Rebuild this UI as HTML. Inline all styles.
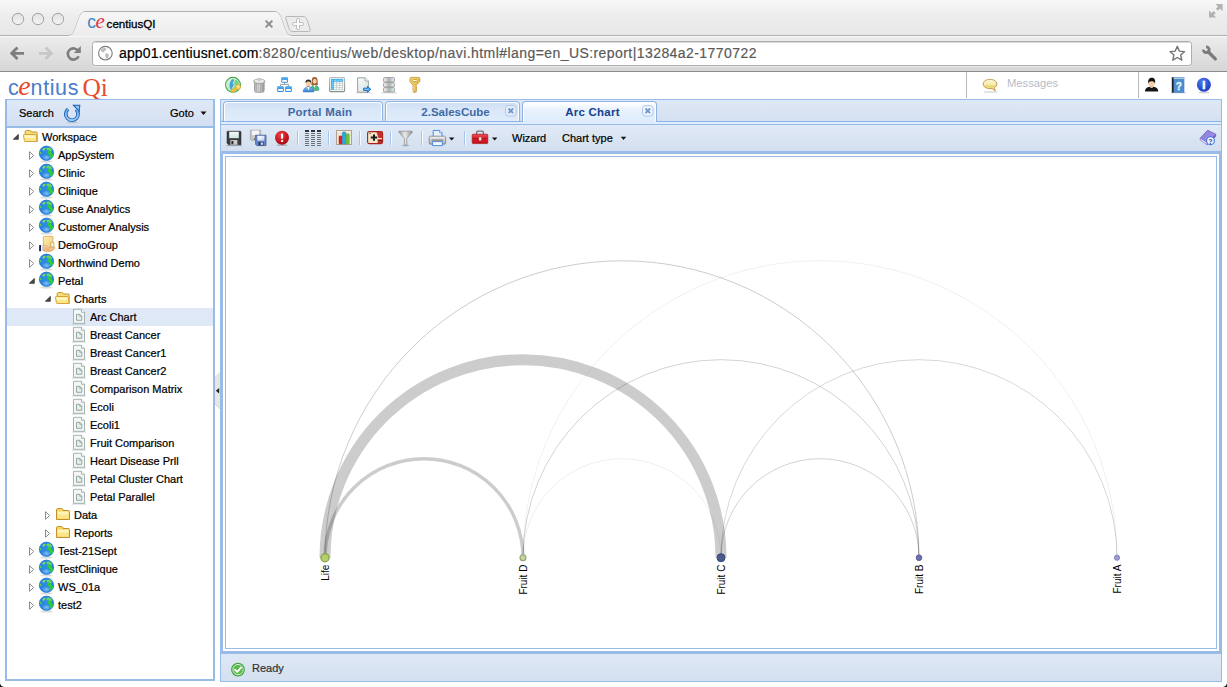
<!DOCTYPE html>
<html>
<head>
<meta charset="utf-8">
<title>centiusQI</title>
<style>
html,body{margin:0;padding:0;}
body{width:1227px;height:687px;overflow:hidden;background:#fff;position:relative;font-family:"Liberation Sans",sans-serif;font-size:11px;color:#000;}
.abs{position:absolute;}
/* browser chrome */
#chrome{left:0;top:0;width:1227px;height:72px;background:linear-gradient(#f8f8f8 0,#eeeeee 14px,#e7e7e7 35px,#ececec 37px,#d7d7d7 70px);border-bottom:1px solid #8c8c8c;box-sizing:border-box;}
#url{-webkit-text-stroke:.2px currentColor;left:119px;top:45px;font-size:14px;color:#000;white-space:nowrap;letter-spacing:0.125px;}
#url span{color:#5a5a5a;letter-spacing:.43px;}
#tabtitle{left:106.6px;top:17.4px;font-size:11.6px;line-height:14px;color:#000;-webkit-text-stroke:.3px #000;white-space:nowrap;}
#fav span{position:absolute;line-height:20px;}
/* app */
#left{left:5px;top:99px;width:210px;height:582px;border:2px solid #99bbe8;border-top-width:1px;box-sizing:border-box;background:#fff;}
#lefthd{left:0;top:0;width:206px;height:26px;background:linear-gradient(#dfe8f6,#d3e0f2);border-bottom:2px solid #99bbe8;}
.row{position:absolute;left:0;width:206px;height:18px;line-height:18px;white-space:nowrap;}
.row span{position:absolute;top:0;-webkit-text-stroke:.22px #000;}
.sel{background:#dfe8f6;}
#right{left:220px;top:99px;width:1002px;height:582px;}
#tabstrip{left:0;top:0;width:1002px;height:25px;background:#dce7f6;border:1px solid #99bbe8;box-sizing:border-box;}
.tab{position:absolute;height:20px;border:1px solid #8db2e3;border-bottom:none;border-radius:4px 4px 0 0;background:#fbfdff;box-sizing:border-box;color:#416aa3;font-weight:bold;font-size:11.5px;letter-spacing:.25px;text-align:center;}
.tab .ti{position:absolute;left:1px;top:1px;right:1px;bottom:0;border-radius:3px 3px 0 0;background:linear-gradient(#cfdff5,#dbe8f9 45%,#e0ecfc);line-height:18px;white-space:nowrap;}
.tab.act{height:20px;color:#15428b;background:#fff;}
.tab.act .ti{background:linear-gradient(#ffffff,#eaf2fd 35%,#deecfd);}
#tb{left:0;top:25px;width:1002px;height:27px;background:linear-gradient(#dfe9f6,#d0def0);border-left:1px solid #99bbe8;border-right:1px solid #99bbe8;box-sizing:border-box;}
#frame{left:0;top:52px;width:1002px;height:503px;border:3px solid #99bbe8;box-sizing:border-box;background:#fff;}
#inner{left:2px;top:2px;width:992px;height:493px;border:1px solid #99bbe8;box-sizing:border-box;background:#fff;}
#status{left:0;top:555px;width:1002px;height:27px;background:linear-gradient(#dfe9f6,#d0def0);border:1px solid #99bbe8;border-top:none;box-sizing:border-box;}
#logo{left:0;top:0;white-space:nowrap;}
#logo span{position:absolute;line-height:30px;top:73px;transform-origin:0 50%;}
#logo .lb{color:#4a7cc9;font-size:21.5px;}
#logo .le{color:#ea4a2c;font-family:"Liberation Serif",serif;font-style:italic;font-size:28px;}
#logo .lq{color:#ea4a2c;font-family:"Liberation Serif",serif;font-size:25.4px;}
.lbl{-webkit-text-stroke:.22px currentColor;}
</style>
</head>
<body>
<svg class="abs" width="0" height="0" style="left:0;top:0"><defs>
<radialGradient id="gGlobe" cx="0.5" cy="0.42" r="0.58"><stop offset="0" stop-color="#2f8fe4"/><stop offset=".7" stop-color="#2a84da"/><stop offset=".92" stop-color="#2678cf"/><stop offset="1" stop-color="#3c96e6"/></radialGradient>
<linearGradient id="gTrash" x1="0" y1="0" x2="1" y2="0"><stop offset="0" stop-color="#b0b0b0"/><stop offset=".4" stop-color="#e6e6e6"/><stop offset="1" stop-color="#9c9d9a"/></linearGradient>
<linearGradient id="gDoc" x1="0" y1="0" x2="1" y2="1"><stop offset="0" stop-color="#f8fbfa"/><stop offset="1" stop-color="#d5e0de"/></linearGradient>
<linearGradient id="gSrv" x1="0" y1="0" x2="1" y2="0"><stop offset="0" stop-color="#8e8e8e"/><stop offset=".3" stop-color="#dcdcdc"/><stop offset=".6" stop-color="#c4c8c4"/><stop offset="1" stop-color="#9a9a9a"/></linearGradient>
<linearGradient id="gBub" x1="0" y1="0" x2="0" y2="1"><stop offset="0" stop-color="#fbf6d6"/><stop offset=".45" stop-color="#f3ecb0"/><stop offset=".55" stop-color="#e6d96a"/><stop offset="1" stop-color="#efe7a0"/></linearGradient>
<radialGradient id="gInfo" cx=".4" cy=".3" r=".8"><stop offset="0" stop-color="#5679ea"/><stop offset=".6" stop-color="#2a4fd0"/><stop offset="1" stop-color="#1b38ac"/></radialGradient>
<linearGradient id="gLabel" x1="0" y1="0" x2="0" y2="1"><stop offset="0" stop-color="#f4fbfa"/><stop offset="1" stop-color="#cfe6e2"/></linearGradient>
<linearGradient id="gLabel2" x1="0" y1="0" x2="1" y2="1"><stop offset="0" stop-color="#ffffff"/><stop offset="1" stop-color="#c8d4f2"/></linearGradient>
<radialGradient id="gRed" cx=".4" cy=".3" r=".8"><stop offset="0" stop-color="#e8444a"/><stop offset=".55" stop-color="#c81820"/><stop offset="1" stop-color="#9c0c12"/></radialGradient>
<linearGradient id="gFun" x1="0" y1="0" x2="1" y2="0"><stop offset="0" stop-color="#9c9c9c"/><stop offset=".45" stop-color="#ececec"/><stop offset="1" stop-color="#8e8e8e"/></linearGradient>
<linearGradient id="gPrn" x1="0" y1="0" x2="0" y2="1"><stop offset="0" stop-color="#f2f2f2"/><stop offset=".5" stop-color="#cfcfcf"/><stop offset="1" stop-color="#a8a8a8"/></linearGradient>
<linearGradient id="gRedBox" x1="0" y1="0" x2="0" y2="1"><stop offset="0" stop-color="#ee4a50"/><stop offset=".5" stop-color="#d41c24"/><stop offset="1" stop-color="#c0141c"/></linearGradient>
<linearGradient id="gRef" x1="0" y1="0" x2="0" y2="1"><stop offset="0" stop-color="#5ea6ea"/><stop offset="1" stop-color="#9fd0f8"/></linearGradient>
<linearGradient id="gGk" x1="0" y1="0" x2="1" y2="1"><stop offset="0" stop-color="#eaf7e0"/><stop offset=".45" stop-color="#bfe6c8"/><stop offset="1" stop-color="#58c86a"/></linearGradient>
<linearGradient id="gOrg" x1="0" y1="0" x2="0" y2="1"><stop offset="0" stop-color="#6cc2f6"/><stop offset=".35" stop-color="#3a9eee"/><stop offset="1" stop-color="#2f8de4"/></linearGradient>
<linearGradient id="gTblB" x1="0" y1="0" x2="0" y2="1"><stop offset="0" stop-color="#b9bfbe"/><stop offset="1" stop-color="#858d8b"/></linearGradient>
<linearGradient id="gMan" x1="0" y1="0" x2="0" y2="1"><stop offset="0" stop-color="#86bdf0"/><stop offset="1" stop-color="#3b80d2"/></linearGradient>
<linearGradient id="gSrv1" x1="0" y1="0" x2="1" y2="0"><stop offset="0" stop-color="#f6f6f6"/><stop offset=".25" stop-color="#d6d6d6"/><stop offset=".5" stop-color="#aeb0b0"/><stop offset=".8" stop-color="#d4d4f0"/><stop offset="1" stop-color="#f0f2f4"/></linearGradient>
<linearGradient id="gSrv2" x1="0" y1="0" x2="1" y2="0"><stop offset="0" stop-color="#f6f6f6"/><stop offset=".25" stop-color="#d6d6d6"/><stop offset=".5" stop-color="#aeb0b0"/><stop offset=".8" stop-color="#cadcd8"/><stop offset="1" stop-color="#f0f2f4"/></linearGradient>
<linearGradient id="gSrv3" x1="0" y1="0" x2="1" y2="0"><stop offset="0" stop-color="#f6f6f6"/><stop offset=".25" stop-color="#d6d6d6"/><stop offset=".5" stop-color="#aeb0b0"/><stop offset=".8" stop-color="#c2e0cc"/><stop offset="1" stop-color="#f0f2f4"/></linearGradient>
<linearGradient id="gKey" x1="0" y1="0" x2="1" y2="1"><stop offset="0" stop-color="#f6d87a"/><stop offset=".5" stop-color="#e9bf55"/><stop offset="1" stop-color="#d9a93c"/></linearGradient>
<radialGradient id="gGlow" cx=".5" cy=".5" r=".5"><stop offset="0" stop-color="#8ccaff" stop-opacity=".85"/><stop offset="1" stop-color="#8ccaff" stop-opacity="0"/></radialGradient>
<linearGradient id="gBook" x1="0" y1="0" x2="1" y2="1"><stop offset="0" stop-color="#8676d4"/><stop offset="1" stop-color="#a99cea"/></linearGradient>
<linearGradient id="gGrpF" x1="0" y1="0" x2="1" y2="1"><stop offset="0" stop-color="#faeaa8"/><stop offset="1" stop-color="#ecd288"/></linearGradient>
<linearGradient id="gGrpS" x1="0" y1="0" x2="0" y2="1"><stop offset="0" stop-color="#ffffff"/><stop offset=".55" stop-color="#e8f6fd"/><stop offset="1" stop-color="#2fa8ec"/></linearGradient>
<linearGradient id="gGrpH" x1="0" y1="0" x2="0" y2="1"><stop offset="0" stop-color="#f8d2a0"/><stop offset="1" stop-color="#eeb478"/></linearGradient>
<linearGradient id="gGrpC" x1="0" y1="0" x2="1" y2="0"><stop offset="0" stop-color="#ffffff"/><stop offset="1" stop-color="#c4c8d0"/></linearGradient>
</defs></svg>
<div id="chrome" class="abs"></div>
<svg class="abs" style="left:0;top:0" width="1227" height="72" viewBox="0 0 1227 72">
<defs>
<linearGradient id="gtab" x1="0" y1="0" x2="0" y2="1"><stop offset="0" stop-color="#f6f6f6"/><stop offset="1" stop-color="#ececec"/></linearGradient>
<linearGradient id="gcir" x1="0" y1="0" x2="0" y2="1"><stop offset="0" stop-color="#e2e2e2"/><stop offset="1" stop-color="#f4f4f4"/></linearGradient>
</defs>
<!-- tab strip bottom line -->
<path d="M0 35.5 H68 C72 35.5 73.5 33 74.8 29.5 L79.2 17.5 C80.5 14 82 11.5 86 11.5 H274 C278 11.5 279.5 14 280.8 17.5 L285.2 29.5 C286.5 33 288 35.5 292 35.5 H1227" fill="none" stroke="#b0b0b0" stroke-width="1"/>
<path d="M68 36 C72 35.5 73.5 33 74.8 29.5 L79.2 17.5 C80.5 14 82 12 86 12 H274 C278 12 279.5 14 280.8 17.5 L285.2 29.5 C286.5 33 288 35.5 292 36 Z" fill="url(#gtab)"/>
<path d="M0 36.5 H1227" stroke="#f8f8f8" stroke-width="1" fill="none"/>
<!-- traffic lights -->
<g fill="url(#gcir)" stroke="#a3a3a3" stroke-width="1">
<circle cx="18" cy="19" r="5.7"/><circle cx="38" cy="19" r="5.7"/><circle cx="58" cy="19" r="5.7"/>
</g>
<!-- close x -->
<path d="M265.6 20.6 L272.4 27.4 M272.4 20.6 L265.6 27.4" stroke="#8c8c8c" stroke-width="2" fill="none"/>
<!-- new tab button -->
<path d="M286.5 16.5 H303 C305.5 16.5 306.5 18 307.3 20.5 L310 29 C310.5 30.5 310 31.5 308.5 31.5 H293 C290.5 31.5 289.5 30 288.7 27.5 L286 19 C285.5 17.5 285.5 16.5 286.5 16.5 Z" fill="#ececec" stroke="#b8b8b8" stroke-width="1"/>
<path d="M298 19.8 V28.2 M293.8 24 H302.2" stroke="#b5b5b5" stroke-width="3.6" stroke-linecap="round" fill="none"/>
<path d="M298 19.8 V28.2 M293.8 24 H302.2" stroke="#fbfbfb" stroke-width="2" stroke-linecap="round" fill="none"/>
<!-- fullscreen -->
<g fill="#b2b2b2" stroke="none">
<path d="M1222.6 4 V11.2 L1220 8.6 L1217.9 10.7 L1215.9 8.7 L1218 6.6 L1215.4 4 Z"/>
<path d="M1209 17.6 V10.4 L1211.6 13 L1213.7 10.9 L1215.7 12.9 L1213.6 15 L1216.2 17.6 Z"/>
</g>
<!-- back -->
<path d="M24 53.3 H12.5 M17.5 47.5 L11.7 53.3 L17.5 59.1" fill="none" stroke="#7d7d7d" stroke-width="2.8" stroke-linejoin="miter"/>
<!-- forward -->
<path d="M39 53.3 H50.5 M45.5 47.5 L51.3 53.3 L45.5 59.1" fill="none" stroke="#c6c6c6" stroke-width="2.8" stroke-linejoin="miter"/>
<!-- reload -->
<path d="M78.2 51 A5.6 5.6 0 1 0 78.6 56.2" fill="none" stroke="#7d7d7d" stroke-width="2.6"/>
<path d="M80.8 46 V53 H73.8 Z" fill="#7d7d7d"/>
<!-- url box -->
<path d="M94 66.5 H1190" stroke="#e9e9e9" fill="none"/>
<rect x="92.5" y="41.5" width="1099" height="24" rx="3" ry="3" fill="#fff" stroke="#adadad"/>
<path d="M95 42.5 H1189" stroke="#d9d9d9" fill="none"/>
<!-- globe -->
<circle cx="105.4" cy="53.2" r="6.8" fill="#fdfdfd" stroke="#7a7a7a" stroke-width="1.1"/>
<path d="M102 48.5 C104 47.5 106 48 106.5 49 C106 50.5 104.5 50.5 104 52 C103 53 102 52 101 51 C100.8 50 101.2 49.2 102 48.5 Z M105.5 53.5 C107 53 108.5 54 109 55.5 C108.5 57.5 107.5 58.5 106.5 59 C105.5 57.5 105 56 105.5 53.5 Z" fill="#bcbcbc"/>
<!-- star -->
<path d="M1177.3 46.3 L1179.4 51.1 L1184.6 51.6 L1180.7 55.1 L1181.8 60.2 L1177.3 57.5 L1172.8 60.2 L1173.9 55.1 L1170 51.6 L1175.2 51.1 Z" fill="#fff" stroke="#757575" stroke-width="1.4" stroke-linejoin="round"/>
<!-- wrench -->
<path d="M1206.1 46.9 A2.9 2.9 0 1 1 1203.4 49.6" fill="none" stroke="#7b7b7b" stroke-width="2.7"/>
<path d="M1208.2 51.8 L1215.3 58.9" fill="none" stroke="#7b7b7b" stroke-width="3.4" stroke-linecap="round"/>
</svg>
<div id="fav" class="abs" style="left:0;top:0"><span style="left:87.2px;top:12.2px;font-size:17.5px;color:#3b86c8">c</span><span style="left:95.6px;top:11.4px;font-family:'Liberation Serif',serif;font-style:italic;font-size:21px;color:#e0364a">e</span></div>
<div id="tabtitle" class="abs">centiusQI</div>
<div id="url" class="abs">app01.centiusnet.com<span>:8280/centius/web/desktop/navi.html#lang=en_US:report|13284a2-1770722</span></div>

<div id="logo" class="abs"><span class="lb" style="left:8px">c</span><span class="le" style="left:18.3px;top:71px">e</span><span class="lb" style="left:30.6px;letter-spacing:.6px">ntius</span><span class="lq" style="left:82.5px;top:71.6px">Qi</span></div>
<div id="left" class="abs">
<div id="lefthd" class="abs">
<span class="abs lbl" style="left:12px;top:7px">Search</span>
<svg class="abs" style="left:55px;top:3px" width="20" height="21" viewBox="62 103 20 21">
<ellipse cx="72" cy="122.4" rx="6" ry=".8" fill="#000" opacity=".12"/>
<path d="M76.05 109.39 A6.2 6.2 0 1 1 68.08 109.11" fill="none" stroke="#1b5fb4" stroke-width="3.6"/>
<path d="M72.2 104.8 H80.4 L79.6 112.4 Z" fill="#1b5fb4"/>
<path d="M76.05 109.39 A6.2 6.2 0 1 1 68.08 109.11" fill="none" stroke="url(#gRef)" stroke-width="1.9"/>
<path d="M74.6 105.8 H79.3 L78.8 110 Z" fill="#8cc6f4"/>
</svg>
<span class="abs lbl" style="left:163px;top:7px">Goto</span>
<svg class="abs" style="left:193px;top:11px" width="7" height="5" viewBox="0 0 7 5"><path d="M0.5 0.5 H6.5 L3.5 4 Z" fill="#111"/></svg>
</div>
<div class="row" style="top:28px"><svg class="abs" style="left:5px;top:5px" width="9" height="9" viewBox="0 0 9 9"><g transform="translate(0 0)"><path d="M6.3 1.4 V6.3 H1.4 Z" fill="#4a4a4a" stroke="#1e1e1e" stroke-width=".7"/></g></svg><svg class="abs" style="left:15px;top:0px" width="18" height="17" viewBox="0 0 18 17"><g transform="translate(0.7 0)"><path d="M2.5 13.5 V4 C2.5 3 3 2.5 4 2.5 H7 C8 2.5 8.4 3 8.6 4 H13.5 C14.3 4 14.5 4.4 14.5 5.2 V13.5 Z" fill="#f7dc7a" stroke="#c9932c" stroke-width="1"/>
<path d="M0.8 7.5 C0.6 6.8 1 6.5 1.6 6.5 H12.4 C13 6.5 13.3 6.8 13.4 7.4 L14.4 13.5 H2.6 C2 13.5 1.8 13.2 1.7 12.6 Z" fill="#fdeea0" stroke="#d6a33a" stroke-width="1"/>
<path d="M1.8 7.5 H12.4 L13.2 12.6 H2.8 Z" fill="#fbe27e" opacity=".8"/>
<path d="M1.8 7.5 H12.4 L12.8 10 H2.2 Z" fill="#fff6c4" opacity=".9"/>
</g></svg><span style="left:35px">Workspace</span></div>
<div class="row" style="top:46px"><svg class="abs" style="left:21px;top:4px" width="8" height="11" viewBox="0 0 8 11"><g transform="translate(0.5 0.7)"><path d="M1 1 L5.2 4.8 L1 8.6 Z" fill="#fff" stroke="#8c8c8c" stroke-width="1"/></g></svg><svg class="abs" style="left:31px;top:-1px" width="17" height="19" viewBox="0 0 17 19"><g transform="translate(0.5 0.5)"><ellipse cx="8" cy="16" rx="6" ry="1.1" fill="#8a7a6a" opacity=".28"/>
<circle cx="8" cy="7.8" r="7.5" fill="url(#gGlobe)"/>
<ellipse cx="8" cy="12" rx="5" ry="3.2" fill="url(#gGlow)"/>
<path d="M4.2 3.2 C5 2.4 6.2 2.2 7 2.6 C7.2 3.4 6.6 3.8 6.2 4.4 C5.8 5 5 5.4 4.4 5.2 C4 4.6 3.8 3.8 4.2 3.2 Z" fill="#7ddb74"/>
<path d="M7.8 2.6 C9 1.8 10.6 1.8 11.8 2.4 C12.8 3 13.4 4 13.6 5 C13 5.8 12 5.6 11.2 5.2 C10.4 4.8 9.8 5.2 9 4.8 C8.2 4.2 7.6 3.4 7.8 2.6 Z" fill="#63d560"/>
<path d="M8.8 6 C10 5.4 11.4 5.6 12.6 6 C13.4 6.8 13 7.6 13.6 8.2 C14.4 8.6 14.8 9.6 14.6 10.6 C14.2 11.8 13.4 12.8 12.4 13.2 C11.6 12.6 11.8 11.4 11.6 10.4 C11.4 9.4 10.6 9 10 8.4 C9.2 7.8 8.6 7 8.8 6 Z" fill="#2bd033"/>
<path d="M1.3 6.2 C2 6 2.6 6.6 3 7.4 C3.4 8 3.2 8.6 2.6 8.8 C1.8 8.6 1.2 7.6 1.3 6.2 Z" fill="#4fd44e"/>
<circle cx="8" cy="7.8" r="7.2" fill="none" stroke="#2f86dc" stroke-width=".6" opacity=".8"/>
</g></svg><span style="left:51px">AppSystem</span></div>
<div class="row" style="top:64px"><svg class="abs" style="left:21px;top:4px" width="8" height="11" viewBox="0 0 8 11"><g transform="translate(0.5 0.7)"><path d="M1 1 L5.2 4.8 L1 8.6 Z" fill="#fff" stroke="#8c8c8c" stroke-width="1"/></g></svg><svg class="abs" style="left:31px;top:-1px" width="17" height="19" viewBox="0 0 17 19"><g transform="translate(0.5 0.5)"><ellipse cx="8" cy="16" rx="6" ry="1.1" fill="#8a7a6a" opacity=".28"/>
<circle cx="8" cy="7.8" r="7.5" fill="url(#gGlobe)"/>
<ellipse cx="8" cy="12" rx="5" ry="3.2" fill="url(#gGlow)"/>
<path d="M4.2 3.2 C5 2.4 6.2 2.2 7 2.6 C7.2 3.4 6.6 3.8 6.2 4.4 C5.8 5 5 5.4 4.4 5.2 C4 4.6 3.8 3.8 4.2 3.2 Z" fill="#7ddb74"/>
<path d="M7.8 2.6 C9 1.8 10.6 1.8 11.8 2.4 C12.8 3 13.4 4 13.6 5 C13 5.8 12 5.6 11.2 5.2 C10.4 4.8 9.8 5.2 9 4.8 C8.2 4.2 7.6 3.4 7.8 2.6 Z" fill="#63d560"/>
<path d="M8.8 6 C10 5.4 11.4 5.6 12.6 6 C13.4 6.8 13 7.6 13.6 8.2 C14.4 8.6 14.8 9.6 14.6 10.6 C14.2 11.8 13.4 12.8 12.4 13.2 C11.6 12.6 11.8 11.4 11.6 10.4 C11.4 9.4 10.6 9 10 8.4 C9.2 7.8 8.6 7 8.8 6 Z" fill="#2bd033"/>
<path d="M1.3 6.2 C2 6 2.6 6.6 3 7.4 C3.4 8 3.2 8.6 2.6 8.8 C1.8 8.6 1.2 7.6 1.3 6.2 Z" fill="#4fd44e"/>
<circle cx="8" cy="7.8" r="7.2" fill="none" stroke="#2f86dc" stroke-width=".6" opacity=".8"/>
</g></svg><span style="left:51px">Clinic</span></div>
<div class="row" style="top:82px"><svg class="abs" style="left:21px;top:4px" width="8" height="11" viewBox="0 0 8 11"><g transform="translate(0.5 0.7)"><path d="M1 1 L5.2 4.8 L1 8.6 Z" fill="#fff" stroke="#8c8c8c" stroke-width="1"/></g></svg><svg class="abs" style="left:31px;top:-1px" width="17" height="19" viewBox="0 0 17 19"><g transform="translate(0.5 0.5)"><ellipse cx="8" cy="16" rx="6" ry="1.1" fill="#8a7a6a" opacity=".28"/>
<circle cx="8" cy="7.8" r="7.5" fill="url(#gGlobe)"/>
<ellipse cx="8" cy="12" rx="5" ry="3.2" fill="url(#gGlow)"/>
<path d="M4.2 3.2 C5 2.4 6.2 2.2 7 2.6 C7.2 3.4 6.6 3.8 6.2 4.4 C5.8 5 5 5.4 4.4 5.2 C4 4.6 3.8 3.8 4.2 3.2 Z" fill="#7ddb74"/>
<path d="M7.8 2.6 C9 1.8 10.6 1.8 11.8 2.4 C12.8 3 13.4 4 13.6 5 C13 5.8 12 5.6 11.2 5.2 C10.4 4.8 9.8 5.2 9 4.8 C8.2 4.2 7.6 3.4 7.8 2.6 Z" fill="#63d560"/>
<path d="M8.8 6 C10 5.4 11.4 5.6 12.6 6 C13.4 6.8 13 7.6 13.6 8.2 C14.4 8.6 14.8 9.6 14.6 10.6 C14.2 11.8 13.4 12.8 12.4 13.2 C11.6 12.6 11.8 11.4 11.6 10.4 C11.4 9.4 10.6 9 10 8.4 C9.2 7.8 8.6 7 8.8 6 Z" fill="#2bd033"/>
<path d="M1.3 6.2 C2 6 2.6 6.6 3 7.4 C3.4 8 3.2 8.6 2.6 8.8 C1.8 8.6 1.2 7.6 1.3 6.2 Z" fill="#4fd44e"/>
<circle cx="8" cy="7.8" r="7.2" fill="none" stroke="#2f86dc" stroke-width=".6" opacity=".8"/>
</g></svg><span style="left:51px">Clinique</span></div>
<div class="row" style="top:100px"><svg class="abs" style="left:21px;top:4px" width="8" height="11" viewBox="0 0 8 11"><g transform="translate(0.5 0.7)"><path d="M1 1 L5.2 4.8 L1 8.6 Z" fill="#fff" stroke="#8c8c8c" stroke-width="1"/></g></svg><svg class="abs" style="left:31px;top:-1px" width="17" height="19" viewBox="0 0 17 19"><g transform="translate(0.5 0.5)"><ellipse cx="8" cy="16" rx="6" ry="1.1" fill="#8a7a6a" opacity=".28"/>
<circle cx="8" cy="7.8" r="7.5" fill="url(#gGlobe)"/>
<ellipse cx="8" cy="12" rx="5" ry="3.2" fill="url(#gGlow)"/>
<path d="M4.2 3.2 C5 2.4 6.2 2.2 7 2.6 C7.2 3.4 6.6 3.8 6.2 4.4 C5.8 5 5 5.4 4.4 5.2 C4 4.6 3.8 3.8 4.2 3.2 Z" fill="#7ddb74"/>
<path d="M7.8 2.6 C9 1.8 10.6 1.8 11.8 2.4 C12.8 3 13.4 4 13.6 5 C13 5.8 12 5.6 11.2 5.2 C10.4 4.8 9.8 5.2 9 4.8 C8.2 4.2 7.6 3.4 7.8 2.6 Z" fill="#63d560"/>
<path d="M8.8 6 C10 5.4 11.4 5.6 12.6 6 C13.4 6.8 13 7.6 13.6 8.2 C14.4 8.6 14.8 9.6 14.6 10.6 C14.2 11.8 13.4 12.8 12.4 13.2 C11.6 12.6 11.8 11.4 11.6 10.4 C11.4 9.4 10.6 9 10 8.4 C9.2 7.8 8.6 7 8.8 6 Z" fill="#2bd033"/>
<path d="M1.3 6.2 C2 6 2.6 6.6 3 7.4 C3.4 8 3.2 8.6 2.6 8.8 C1.8 8.6 1.2 7.6 1.3 6.2 Z" fill="#4fd44e"/>
<circle cx="8" cy="7.8" r="7.2" fill="none" stroke="#2f86dc" stroke-width=".6" opacity=".8"/>
</g></svg><span style="left:51px">Cuse Analytics</span></div>
<div class="row" style="top:118px"><svg class="abs" style="left:21px;top:4px" width="8" height="11" viewBox="0 0 8 11"><g transform="translate(0.5 0.7)"><path d="M1 1 L5.2 4.8 L1 8.6 Z" fill="#fff" stroke="#8c8c8c" stroke-width="1"/></g></svg><svg class="abs" style="left:31px;top:-1px" width="17" height="19" viewBox="0 0 17 19"><g transform="translate(0.5 0.5)"><ellipse cx="8" cy="16" rx="6" ry="1.1" fill="#8a7a6a" opacity=".28"/>
<circle cx="8" cy="7.8" r="7.5" fill="url(#gGlobe)"/>
<ellipse cx="8" cy="12" rx="5" ry="3.2" fill="url(#gGlow)"/>
<path d="M4.2 3.2 C5 2.4 6.2 2.2 7 2.6 C7.2 3.4 6.6 3.8 6.2 4.4 C5.8 5 5 5.4 4.4 5.2 C4 4.6 3.8 3.8 4.2 3.2 Z" fill="#7ddb74"/>
<path d="M7.8 2.6 C9 1.8 10.6 1.8 11.8 2.4 C12.8 3 13.4 4 13.6 5 C13 5.8 12 5.6 11.2 5.2 C10.4 4.8 9.8 5.2 9 4.8 C8.2 4.2 7.6 3.4 7.8 2.6 Z" fill="#63d560"/>
<path d="M8.8 6 C10 5.4 11.4 5.6 12.6 6 C13.4 6.8 13 7.6 13.6 8.2 C14.4 8.6 14.8 9.6 14.6 10.6 C14.2 11.8 13.4 12.8 12.4 13.2 C11.6 12.6 11.8 11.4 11.6 10.4 C11.4 9.4 10.6 9 10 8.4 C9.2 7.8 8.6 7 8.8 6 Z" fill="#2bd033"/>
<path d="M1.3 6.2 C2 6 2.6 6.6 3 7.4 C3.4 8 3.2 8.6 2.6 8.8 C1.8 8.6 1.2 7.6 1.3 6.2 Z" fill="#4fd44e"/>
<circle cx="8" cy="7.8" r="7.2" fill="none" stroke="#2f86dc" stroke-width=".6" opacity=".8"/>
</g></svg><span style="left:51px">Customer Analysis</span></div>
<div class="row" style="top:136px"><svg class="abs" style="left:21px;top:4px" width="8" height="11" viewBox="0 0 8 11"><g transform="translate(0.5 0.7)"><path d="M1 1 L5.2 4.8 L1 8.6 Z" fill="#fff" stroke="#8c8c8c" stroke-width="1"/></g></svg><svg class="abs" style="left:31px;top:-1px" width="18" height="18" viewBox="0 0 18 18"><g transform="translate(0.4 0)"><rect x="4.9" y="1.4" width="9.6" height="11.4" rx=".9" fill="url(#gGrpF)" stroke="#dcb25c" stroke-width=".9"/>
<rect x="11.9" y="7.2" width="3.7" height="6" rx=".8" fill="#f3dc96" stroke="#d4a850" stroke-width=".8"/>
<rect x="13.8" y="8.2" width=".9" height="4.8" fill="url(#gGrpS)"/>
<path d="M4.6 10.4 C6.2 10 7.6 10.4 9 11.2 C10.6 12.2 12.4 12.6 14 12.4 C15.2 12.2 16.2 12.2 16.5 12.8 C16.6 13.8 15.2 15.2 13 16 C10.6 16.9 8 16.8 4.6 15.7 Z" fill="url(#gGrpH)" stroke="#d49a58" stroke-width=".6"/>
<path d="M6 12.4 C7.6 12.6 9 13.4 10.6 13.6 M6.4 14 C8 14.4 9.6 14.8 11.4 14.6" fill="none" stroke="#e0a868" stroke-width=".6" opacity=".8"/>
<rect x="0.7" y="10" width="2" height="6.2" rx=".4" fill="#1e1e56"/>
<rect x="2.7" y="10.2" width="1.8" height="5.8" fill="url(#gGrpC)"/>
</g></svg><span style="left:51px">DemoGroup</span></div>
<div class="row" style="top:154px"><svg class="abs" style="left:21px;top:4px" width="8" height="11" viewBox="0 0 8 11"><g transform="translate(0.5 0.7)"><path d="M1 1 L5.2 4.8 L1 8.6 Z" fill="#fff" stroke="#8c8c8c" stroke-width="1"/></g></svg><svg class="abs" style="left:31px;top:-1px" width="17" height="19" viewBox="0 0 17 19"><g transform="translate(0.5 0.5)"><ellipse cx="8" cy="16" rx="6" ry="1.1" fill="#8a7a6a" opacity=".28"/>
<circle cx="8" cy="7.8" r="7.5" fill="url(#gGlobe)"/>
<ellipse cx="8" cy="12" rx="5" ry="3.2" fill="url(#gGlow)"/>
<path d="M4.2 3.2 C5 2.4 6.2 2.2 7 2.6 C7.2 3.4 6.6 3.8 6.2 4.4 C5.8 5 5 5.4 4.4 5.2 C4 4.6 3.8 3.8 4.2 3.2 Z" fill="#7ddb74"/>
<path d="M7.8 2.6 C9 1.8 10.6 1.8 11.8 2.4 C12.8 3 13.4 4 13.6 5 C13 5.8 12 5.6 11.2 5.2 C10.4 4.8 9.8 5.2 9 4.8 C8.2 4.2 7.6 3.4 7.8 2.6 Z" fill="#63d560"/>
<path d="M8.8 6 C10 5.4 11.4 5.6 12.6 6 C13.4 6.8 13 7.6 13.6 8.2 C14.4 8.6 14.8 9.6 14.6 10.6 C14.2 11.8 13.4 12.8 12.4 13.2 C11.6 12.6 11.8 11.4 11.6 10.4 C11.4 9.4 10.6 9 10 8.4 C9.2 7.8 8.6 7 8.8 6 Z" fill="#2bd033"/>
<path d="M1.3 6.2 C2 6 2.6 6.6 3 7.4 C3.4 8 3.2 8.6 2.6 8.8 C1.8 8.6 1.2 7.6 1.3 6.2 Z" fill="#4fd44e"/>
<circle cx="8" cy="7.8" r="7.2" fill="none" stroke="#2f86dc" stroke-width=".6" opacity=".8"/>
</g></svg><span style="left:51px">Northwind Demo</span></div>
<div class="row" style="top:172px"><svg class="abs" style="left:21px;top:5px" width="9" height="9" viewBox="0 0 9 9"><g transform="translate(0 0)"><path d="M6.3 1.4 V6.3 H1.4 Z" fill="#4a4a4a" stroke="#1e1e1e" stroke-width=".7"/></g></svg><svg class="abs" style="left:31px;top:-1px" width="17" height="19" viewBox="0 0 17 19"><g transform="translate(0.5 0.5)"><ellipse cx="8" cy="16" rx="6" ry="1.1" fill="#8a7a6a" opacity=".28"/>
<circle cx="8" cy="7.8" r="7.5" fill="url(#gGlobe)"/>
<ellipse cx="8" cy="12" rx="5" ry="3.2" fill="url(#gGlow)"/>
<path d="M4.2 3.2 C5 2.4 6.2 2.2 7 2.6 C7.2 3.4 6.6 3.8 6.2 4.4 C5.8 5 5 5.4 4.4 5.2 C4 4.6 3.8 3.8 4.2 3.2 Z" fill="#7ddb74"/>
<path d="M7.8 2.6 C9 1.8 10.6 1.8 11.8 2.4 C12.8 3 13.4 4 13.6 5 C13 5.8 12 5.6 11.2 5.2 C10.4 4.8 9.8 5.2 9 4.8 C8.2 4.2 7.6 3.4 7.8 2.6 Z" fill="#63d560"/>
<path d="M8.8 6 C10 5.4 11.4 5.6 12.6 6 C13.4 6.8 13 7.6 13.6 8.2 C14.4 8.6 14.8 9.6 14.6 10.6 C14.2 11.8 13.4 12.8 12.4 13.2 C11.6 12.6 11.8 11.4 11.6 10.4 C11.4 9.4 10.6 9 10 8.4 C9.2 7.8 8.6 7 8.8 6 Z" fill="#2bd033"/>
<path d="M1.3 6.2 C2 6 2.6 6.6 3 7.4 C3.4 8 3.2 8.6 2.6 8.8 C1.8 8.6 1.2 7.6 1.3 6.2 Z" fill="#4fd44e"/>
<circle cx="8" cy="7.8" r="7.2" fill="none" stroke="#2f86dc" stroke-width=".6" opacity=".8"/>
</g></svg><span style="left:51px">Petal</span></div>
<div class="row" style="top:190px"><svg class="abs" style="left:37px;top:5px" width="9" height="9" viewBox="0 0 9 9"><g transform="translate(0 0)"><path d="M6.3 1.4 V6.3 H1.4 Z" fill="#4a4a4a" stroke="#1e1e1e" stroke-width=".7"/></g></svg><svg class="abs" style="left:47px;top:0px" width="18" height="17" viewBox="0 0 18 17"><g transform="translate(0.7 0)"><path d="M2.5 13.5 V4 C2.5 3 3 2.5 4 2.5 H7 C8 2.5 8.4 3 8.6 4 H13.5 C14.3 4 14.5 4.4 14.5 5.2 V13.5 Z" fill="#f7dc7a" stroke="#c9932c" stroke-width="1"/>
<path d="M0.8 7.5 C0.6 6.8 1 6.5 1.6 6.5 H12.4 C13 6.5 13.3 6.8 13.4 7.4 L14.4 13.5 H2.6 C2 13.5 1.8 13.2 1.7 12.6 Z" fill="#fdeea0" stroke="#d6a33a" stroke-width="1"/>
<path d="M1.8 7.5 H12.4 L13.2 12.6 H2.8 Z" fill="#fbe27e" opacity=".8"/>
<path d="M1.8 7.5 H12.4 L12.8 10 H2.2 Z" fill="#fff6c4" opacity=".9"/>
</g></svg><span style="left:67px">Charts</span></div>
<div class="row sel" style="top:208px"><svg class="abs" style="left:65px;top:-1px" width="15" height="18" viewBox="0 0 15 18"><g transform="translate(0 0.8)"><path d="M0 16.2 H14" stroke="#98a8a8" stroke-width="1" opacity=".5"/>
<path d="M1.5 1.5 H9.5 L12.5 4.5 V15.5 H1.5 Z" fill="#f4f7f6" stroke="#a3b4b0" stroke-width="1"/>
<path d="M9.5 1.5 V4.5 H12.5" fill="#fff" stroke="#a3b4b0" stroke-width="1"/>
<path d="M4.5 6.5 H7.8 L9.8 8.5 V12.5 H4.5 Z" fill="#e6eeec" stroke="#93a8a4" stroke-width="1"/>
<path d="M7.8 6.5 V8.5 H9.8" fill="none" stroke="#93a8a4" stroke-width=".9"/>
</g></svg><span style="left:83px">Arc Chart</span></div>
<div class="row" style="top:226px"><svg class="abs" style="left:65px;top:-1px" width="15" height="18" viewBox="0 0 15 18"><g transform="translate(0 0.8)"><path d="M0 16.2 H14" stroke="#98a8a8" stroke-width="1" opacity=".5"/>
<path d="M1.5 1.5 H9.5 L12.5 4.5 V15.5 H1.5 Z" fill="#f4f7f6" stroke="#a3b4b0" stroke-width="1"/>
<path d="M9.5 1.5 V4.5 H12.5" fill="#fff" stroke="#a3b4b0" stroke-width="1"/>
<path d="M4.5 6.5 H7.8 L9.8 8.5 V12.5 H4.5 Z" fill="#e6eeec" stroke="#93a8a4" stroke-width="1"/>
<path d="M7.8 6.5 V8.5 H9.8" fill="none" stroke="#93a8a4" stroke-width=".9"/>
</g></svg><span style="left:83px">Breast Cancer</span></div>
<div class="row" style="top:244px"><svg class="abs" style="left:65px;top:-1px" width="15" height="18" viewBox="0 0 15 18"><g transform="translate(0 0.8)"><path d="M0 16.2 H14" stroke="#98a8a8" stroke-width="1" opacity=".5"/>
<path d="M1.5 1.5 H9.5 L12.5 4.5 V15.5 H1.5 Z" fill="#f4f7f6" stroke="#a3b4b0" stroke-width="1"/>
<path d="M9.5 1.5 V4.5 H12.5" fill="#fff" stroke="#a3b4b0" stroke-width="1"/>
<path d="M4.5 6.5 H7.8 L9.8 8.5 V12.5 H4.5 Z" fill="#e6eeec" stroke="#93a8a4" stroke-width="1"/>
<path d="M7.8 6.5 V8.5 H9.8" fill="none" stroke="#93a8a4" stroke-width=".9"/>
</g></svg><span style="left:83px">Breast Cancer1</span></div>
<div class="row" style="top:262px"><svg class="abs" style="left:65px;top:-1px" width="15" height="18" viewBox="0 0 15 18"><g transform="translate(0 0.8)"><path d="M0 16.2 H14" stroke="#98a8a8" stroke-width="1" opacity=".5"/>
<path d="M1.5 1.5 H9.5 L12.5 4.5 V15.5 H1.5 Z" fill="#f4f7f6" stroke="#a3b4b0" stroke-width="1"/>
<path d="M9.5 1.5 V4.5 H12.5" fill="#fff" stroke="#a3b4b0" stroke-width="1"/>
<path d="M4.5 6.5 H7.8 L9.8 8.5 V12.5 H4.5 Z" fill="#e6eeec" stroke="#93a8a4" stroke-width="1"/>
<path d="M7.8 6.5 V8.5 H9.8" fill="none" stroke="#93a8a4" stroke-width=".9"/>
</g></svg><span style="left:83px">Breast Cancer2</span></div>
<div class="row" style="top:280px"><svg class="abs" style="left:65px;top:-1px" width="15" height="18" viewBox="0 0 15 18"><g transform="translate(0 0.8)"><path d="M0 16.2 H14" stroke="#98a8a8" stroke-width="1" opacity=".5"/>
<path d="M1.5 1.5 H9.5 L12.5 4.5 V15.5 H1.5 Z" fill="#f4f7f6" stroke="#a3b4b0" stroke-width="1"/>
<path d="M9.5 1.5 V4.5 H12.5" fill="#fff" stroke="#a3b4b0" stroke-width="1"/>
<path d="M4.5 6.5 H7.8 L9.8 8.5 V12.5 H4.5 Z" fill="#e6eeec" stroke="#93a8a4" stroke-width="1"/>
<path d="M7.8 6.5 V8.5 H9.8" fill="none" stroke="#93a8a4" stroke-width=".9"/>
</g></svg><span style="left:83px">Comparison Matrix</span></div>
<div class="row" style="top:298px"><svg class="abs" style="left:65px;top:-1px" width="15" height="18" viewBox="0 0 15 18"><g transform="translate(0 0.8)"><path d="M0 16.2 H14" stroke="#98a8a8" stroke-width="1" opacity=".5"/>
<path d="M1.5 1.5 H9.5 L12.5 4.5 V15.5 H1.5 Z" fill="#f4f7f6" stroke="#a3b4b0" stroke-width="1"/>
<path d="M9.5 1.5 V4.5 H12.5" fill="#fff" stroke="#a3b4b0" stroke-width="1"/>
<path d="M4.5 6.5 H7.8 L9.8 8.5 V12.5 H4.5 Z" fill="#e6eeec" stroke="#93a8a4" stroke-width="1"/>
<path d="M7.8 6.5 V8.5 H9.8" fill="none" stroke="#93a8a4" stroke-width=".9"/>
</g></svg><span style="left:83px">Ecoli</span></div>
<div class="row" style="top:316px"><svg class="abs" style="left:65px;top:-1px" width="15" height="18" viewBox="0 0 15 18"><g transform="translate(0 0.8)"><path d="M0 16.2 H14" stroke="#98a8a8" stroke-width="1" opacity=".5"/>
<path d="M1.5 1.5 H9.5 L12.5 4.5 V15.5 H1.5 Z" fill="#f4f7f6" stroke="#a3b4b0" stroke-width="1"/>
<path d="M9.5 1.5 V4.5 H12.5" fill="#fff" stroke="#a3b4b0" stroke-width="1"/>
<path d="M4.5 6.5 H7.8 L9.8 8.5 V12.5 H4.5 Z" fill="#e6eeec" stroke="#93a8a4" stroke-width="1"/>
<path d="M7.8 6.5 V8.5 H9.8" fill="none" stroke="#93a8a4" stroke-width=".9"/>
</g></svg><span style="left:83px">Ecoli1</span></div>
<div class="row" style="top:334px"><svg class="abs" style="left:65px;top:-1px" width="15" height="18" viewBox="0 0 15 18"><g transform="translate(0 0.8)"><path d="M0 16.2 H14" stroke="#98a8a8" stroke-width="1" opacity=".5"/>
<path d="M1.5 1.5 H9.5 L12.5 4.5 V15.5 H1.5 Z" fill="#f4f7f6" stroke="#a3b4b0" stroke-width="1"/>
<path d="M9.5 1.5 V4.5 H12.5" fill="#fff" stroke="#a3b4b0" stroke-width="1"/>
<path d="M4.5 6.5 H7.8 L9.8 8.5 V12.5 H4.5 Z" fill="#e6eeec" stroke="#93a8a4" stroke-width="1"/>
<path d="M7.8 6.5 V8.5 H9.8" fill="none" stroke="#93a8a4" stroke-width=".9"/>
</g></svg><span style="left:83px">Fruit Comparison</span></div>
<div class="row" style="top:352px"><svg class="abs" style="left:65px;top:-1px" width="15" height="18" viewBox="0 0 15 18"><g transform="translate(0 0.8)"><path d="M0 16.2 H14" stroke="#98a8a8" stroke-width="1" opacity=".5"/>
<path d="M1.5 1.5 H9.5 L12.5 4.5 V15.5 H1.5 Z" fill="#f4f7f6" stroke="#a3b4b0" stroke-width="1"/>
<path d="M9.5 1.5 V4.5 H12.5" fill="#fff" stroke="#a3b4b0" stroke-width="1"/>
<path d="M4.5 6.5 H7.8 L9.8 8.5 V12.5 H4.5 Z" fill="#e6eeec" stroke="#93a8a4" stroke-width="1"/>
<path d="M7.8 6.5 V8.5 H9.8" fill="none" stroke="#93a8a4" stroke-width=".9"/>
</g></svg><span style="left:83px">Heart Disease Prll</span></div>
<div class="row" style="top:370px"><svg class="abs" style="left:65px;top:-1px" width="15" height="18" viewBox="0 0 15 18"><g transform="translate(0 0.8)"><path d="M0 16.2 H14" stroke="#98a8a8" stroke-width="1" opacity=".5"/>
<path d="M1.5 1.5 H9.5 L12.5 4.5 V15.5 H1.5 Z" fill="#f4f7f6" stroke="#a3b4b0" stroke-width="1"/>
<path d="M9.5 1.5 V4.5 H12.5" fill="#fff" stroke="#a3b4b0" stroke-width="1"/>
<path d="M4.5 6.5 H7.8 L9.8 8.5 V12.5 H4.5 Z" fill="#e6eeec" stroke="#93a8a4" stroke-width="1"/>
<path d="M7.8 6.5 V8.5 H9.8" fill="none" stroke="#93a8a4" stroke-width=".9"/>
</g></svg><span style="left:83px">Petal Cluster Chart</span></div>
<div class="row" style="top:388px"><svg class="abs" style="left:65px;top:-1px" width="15" height="18" viewBox="0 0 15 18"><g transform="translate(0 0.8)"><path d="M0 16.2 H14" stroke="#98a8a8" stroke-width="1" opacity=".5"/>
<path d="M1.5 1.5 H9.5 L12.5 4.5 V15.5 H1.5 Z" fill="#f4f7f6" stroke="#a3b4b0" stroke-width="1"/>
<path d="M9.5 1.5 V4.5 H12.5" fill="#fff" stroke="#a3b4b0" stroke-width="1"/>
<path d="M4.5 6.5 H7.8 L9.8 8.5 V12.5 H4.5 Z" fill="#e6eeec" stroke="#93a8a4" stroke-width="1"/>
<path d="M7.8 6.5 V8.5 H9.8" fill="none" stroke="#93a8a4" stroke-width=".9"/>
</g></svg><span style="left:83px">Petal Parallel</span></div>
<div class="row" style="top:406px"><svg class="abs" style="left:37px;top:4px" width="8" height="11" viewBox="0 0 8 11"><g transform="translate(0.5 0.7)"><path d="M1 1 L5.2 4.8 L1 8.6 Z" fill="#fff" stroke="#8c8c8c" stroke-width="1"/></g></svg><svg class="abs" style="left:48px;top:0px" width="17" height="17" viewBox="0 0 17 17"><g transform="translate(0 0)"><path d="M1.5 13.5 V4 C1.5 3 2 2.5 3 2.5 H6.4 C7.4 2.5 7.8 3 8 4.5 H13.5 C14.2 4.5 14.5 4.8 14.5 5.5 V13.5 Z" fill="#f6d566" stroke="#c48f28" stroke-width="1"/>
<path d="M2.5 6 H13.5 V12.5 H2.5 Z" fill="#fde68a"/>
<path d="M2.5 5.6 H13.5 V8.5 H2.5 Z" fill="#fff4b8"/>
</g></svg><span style="left:67px">Data</span></div>
<div class="row" style="top:424px"><svg class="abs" style="left:37px;top:4px" width="8" height="11" viewBox="0 0 8 11"><g transform="translate(0.5 0.7)"><path d="M1 1 L5.2 4.8 L1 8.6 Z" fill="#fff" stroke="#8c8c8c" stroke-width="1"/></g></svg><svg class="abs" style="left:48px;top:0px" width="17" height="17" viewBox="0 0 17 17"><g transform="translate(0 0)"><path d="M1.5 13.5 V4 C1.5 3 2 2.5 3 2.5 H6.4 C7.4 2.5 7.8 3 8 4.5 H13.5 C14.2 4.5 14.5 4.8 14.5 5.5 V13.5 Z" fill="#f6d566" stroke="#c48f28" stroke-width="1"/>
<path d="M2.5 6 H13.5 V12.5 H2.5 Z" fill="#fde68a"/>
<path d="M2.5 5.6 H13.5 V8.5 H2.5 Z" fill="#fff4b8"/>
</g></svg><span style="left:67px">Reports</span></div>
<div class="row" style="top:442px"><svg class="abs" style="left:21px;top:4px" width="8" height="11" viewBox="0 0 8 11"><g transform="translate(0.5 0.7)"><path d="M1 1 L5.2 4.8 L1 8.6 Z" fill="#fff" stroke="#8c8c8c" stroke-width="1"/></g></svg><svg class="abs" style="left:31px;top:-1px" width="17" height="19" viewBox="0 0 17 19"><g transform="translate(0.5 0.5)"><ellipse cx="8" cy="16" rx="6" ry="1.1" fill="#8a7a6a" opacity=".28"/>
<circle cx="8" cy="7.8" r="7.5" fill="url(#gGlobe)"/>
<ellipse cx="8" cy="12" rx="5" ry="3.2" fill="url(#gGlow)"/>
<path d="M4.2 3.2 C5 2.4 6.2 2.2 7 2.6 C7.2 3.4 6.6 3.8 6.2 4.4 C5.8 5 5 5.4 4.4 5.2 C4 4.6 3.8 3.8 4.2 3.2 Z" fill="#7ddb74"/>
<path d="M7.8 2.6 C9 1.8 10.6 1.8 11.8 2.4 C12.8 3 13.4 4 13.6 5 C13 5.8 12 5.6 11.2 5.2 C10.4 4.8 9.8 5.2 9 4.8 C8.2 4.2 7.6 3.4 7.8 2.6 Z" fill="#63d560"/>
<path d="M8.8 6 C10 5.4 11.4 5.6 12.6 6 C13.4 6.8 13 7.6 13.6 8.2 C14.4 8.6 14.8 9.6 14.6 10.6 C14.2 11.8 13.4 12.8 12.4 13.2 C11.6 12.6 11.8 11.4 11.6 10.4 C11.4 9.4 10.6 9 10 8.4 C9.2 7.8 8.6 7 8.8 6 Z" fill="#2bd033"/>
<path d="M1.3 6.2 C2 6 2.6 6.6 3 7.4 C3.4 8 3.2 8.6 2.6 8.8 C1.8 8.6 1.2 7.6 1.3 6.2 Z" fill="#4fd44e"/>
<circle cx="8" cy="7.8" r="7.2" fill="none" stroke="#2f86dc" stroke-width=".6" opacity=".8"/>
</g></svg><span style="left:51px">Test-21Sept</span></div>
<div class="row" style="top:460px"><svg class="abs" style="left:21px;top:4px" width="8" height="11" viewBox="0 0 8 11"><g transform="translate(0.5 0.7)"><path d="M1 1 L5.2 4.8 L1 8.6 Z" fill="#fff" stroke="#8c8c8c" stroke-width="1"/></g></svg><svg class="abs" style="left:31px;top:-1px" width="17" height="19" viewBox="0 0 17 19"><g transform="translate(0.5 0.5)"><ellipse cx="8" cy="16" rx="6" ry="1.1" fill="#8a7a6a" opacity=".28"/>
<circle cx="8" cy="7.8" r="7.5" fill="url(#gGlobe)"/>
<ellipse cx="8" cy="12" rx="5" ry="3.2" fill="url(#gGlow)"/>
<path d="M4.2 3.2 C5 2.4 6.2 2.2 7 2.6 C7.2 3.4 6.6 3.8 6.2 4.4 C5.8 5 5 5.4 4.4 5.2 C4 4.6 3.8 3.8 4.2 3.2 Z" fill="#7ddb74"/>
<path d="M7.8 2.6 C9 1.8 10.6 1.8 11.8 2.4 C12.8 3 13.4 4 13.6 5 C13 5.8 12 5.6 11.2 5.2 C10.4 4.8 9.8 5.2 9 4.8 C8.2 4.2 7.6 3.4 7.8 2.6 Z" fill="#63d560"/>
<path d="M8.8 6 C10 5.4 11.4 5.6 12.6 6 C13.4 6.8 13 7.6 13.6 8.2 C14.4 8.6 14.8 9.6 14.6 10.6 C14.2 11.8 13.4 12.8 12.4 13.2 C11.6 12.6 11.8 11.4 11.6 10.4 C11.4 9.4 10.6 9 10 8.4 C9.2 7.8 8.6 7 8.8 6 Z" fill="#2bd033"/>
<path d="M1.3 6.2 C2 6 2.6 6.6 3 7.4 C3.4 8 3.2 8.6 2.6 8.8 C1.8 8.6 1.2 7.6 1.3 6.2 Z" fill="#4fd44e"/>
<circle cx="8" cy="7.8" r="7.2" fill="none" stroke="#2f86dc" stroke-width=".6" opacity=".8"/>
</g></svg><span style="left:51px">TestClinique</span></div>
<div class="row" style="top:478px"><svg class="abs" style="left:21px;top:4px" width="8" height="11" viewBox="0 0 8 11"><g transform="translate(0.5 0.7)"><path d="M1 1 L5.2 4.8 L1 8.6 Z" fill="#fff" stroke="#8c8c8c" stroke-width="1"/></g></svg><svg class="abs" style="left:31px;top:-1px" width="17" height="19" viewBox="0 0 17 19"><g transform="translate(0.5 0.5)"><ellipse cx="8" cy="16" rx="6" ry="1.1" fill="#8a7a6a" opacity=".28"/>
<circle cx="8" cy="7.8" r="7.5" fill="url(#gGlobe)"/>
<ellipse cx="8" cy="12" rx="5" ry="3.2" fill="url(#gGlow)"/>
<path d="M4.2 3.2 C5 2.4 6.2 2.2 7 2.6 C7.2 3.4 6.6 3.8 6.2 4.4 C5.8 5 5 5.4 4.4 5.2 C4 4.6 3.8 3.8 4.2 3.2 Z" fill="#7ddb74"/>
<path d="M7.8 2.6 C9 1.8 10.6 1.8 11.8 2.4 C12.8 3 13.4 4 13.6 5 C13 5.8 12 5.6 11.2 5.2 C10.4 4.8 9.8 5.2 9 4.8 C8.2 4.2 7.6 3.4 7.8 2.6 Z" fill="#63d560"/>
<path d="M8.8 6 C10 5.4 11.4 5.6 12.6 6 C13.4 6.8 13 7.6 13.6 8.2 C14.4 8.6 14.8 9.6 14.6 10.6 C14.2 11.8 13.4 12.8 12.4 13.2 C11.6 12.6 11.8 11.4 11.6 10.4 C11.4 9.4 10.6 9 10 8.4 C9.2 7.8 8.6 7 8.8 6 Z" fill="#2bd033"/>
<path d="M1.3 6.2 C2 6 2.6 6.6 3 7.4 C3.4 8 3.2 8.6 2.6 8.8 C1.8 8.6 1.2 7.6 1.3 6.2 Z" fill="#4fd44e"/>
<circle cx="8" cy="7.8" r="7.2" fill="none" stroke="#2f86dc" stroke-width=".6" opacity=".8"/>
</g></svg><span style="left:51px">WS_01a</span></div>
<div class="row" style="top:496px"><svg class="abs" style="left:21px;top:4px" width="8" height="11" viewBox="0 0 8 11"><g transform="translate(0.5 0.7)"><path d="M1 1 L5.2 4.8 L1 8.6 Z" fill="#fff" stroke="#8c8c8c" stroke-width="1"/></g></svg><svg class="abs" style="left:31px;top:-1px" width="17" height="19" viewBox="0 0 17 19"><g transform="translate(0.5 0.5)"><ellipse cx="8" cy="16" rx="6" ry="1.1" fill="#8a7a6a" opacity=".28"/>
<circle cx="8" cy="7.8" r="7.5" fill="url(#gGlobe)"/>
<ellipse cx="8" cy="12" rx="5" ry="3.2" fill="url(#gGlow)"/>
<path d="M4.2 3.2 C5 2.4 6.2 2.2 7 2.6 C7.2 3.4 6.6 3.8 6.2 4.4 C5.8 5 5 5.4 4.4 5.2 C4 4.6 3.8 3.8 4.2 3.2 Z" fill="#7ddb74"/>
<path d="M7.8 2.6 C9 1.8 10.6 1.8 11.8 2.4 C12.8 3 13.4 4 13.6 5 C13 5.8 12 5.6 11.2 5.2 C10.4 4.8 9.8 5.2 9 4.8 C8.2 4.2 7.6 3.4 7.8 2.6 Z" fill="#63d560"/>
<path d="M8.8 6 C10 5.4 11.4 5.6 12.6 6 C13.4 6.8 13 7.6 13.6 8.2 C14.4 8.6 14.8 9.6 14.6 10.6 C14.2 11.8 13.4 12.8 12.4 13.2 C11.6 12.6 11.8 11.4 11.6 10.4 C11.4 9.4 10.6 9 10 8.4 C9.2 7.8 8.6 7 8.8 6 Z" fill="#2bd033"/>
<path d="M1.3 6.2 C2 6 2.6 6.6 3 7.4 C3.4 8 3.2 8.6 2.6 8.8 C1.8 8.6 1.2 7.6 1.3 6.2 Z" fill="#4fd44e"/>
<circle cx="8" cy="7.8" r="7.2" fill="none" stroke="#2f86dc" stroke-width=".6" opacity=".8"/>
</g></svg><span style="left:51px">test2</span></div>
</div>
<svg class="abs" style="left:215px;top:372px" width="5" height="38" viewBox="0 0 5 38"><path d="M0 5.5 L5 0.5 V37 L0 32 Z" fill="#e6e6e6"/><path d="M0 5.5 L5 0.5 M0 32 L5 37" stroke="#cfcfcf" stroke-width=".8" fill="none"/><path d="M4.2 16 V21.4 L0.8 18.7 Z" fill="#222"/></svg>

<!-- app header icons -->
<svg class="abs" style="left:222px;top:72px" width="210" height="26" viewBox="222 72 210 26">
<!-- globe with key -->
<circle cx="233" cy="84.8" r="7.4" fill="url(#gGk)" stroke="#3da043" stroke-width="1.1"/>
<circle cx="233" cy="84.8" r="6.4" fill="none" stroke="#def3d2" stroke-width=".8" opacity=".9"/>
<path d="M232.6 79 C234.2 79.4 234.4 80.6 233.4 81.8 C232.2 83 232.8 84 233.8 84.8 C232.8 86.4 231.6 88 231.4 90.4 C229.8 88.4 229.2 86 229.8 83.6 C230.2 81.6 231.2 80 232.6 79 Z" fill="#3f9ce2" opacity=".95"/>
<path d="M234.6 79.4 C236.6 79.8 238.2 81 239 82.8 C238 84.6 236.4 85 234.6 84.6 C233.8 83.4 234.6 82.4 235 81.4 C235.2 80.6 235 80 234.6 79.4 Z" fill="#66d27a" opacity=".9"/>
<g transform="rotate(-35 235.5 88.8)"><rect x="230.6" y="87.7" width="6.4" height="2.2" rx=".9" fill="#f6c63c" stroke="#d79a22" stroke-width=".5"/><circle cx="238.7" cy="88.8" r="2.5" fill="#f9d558" stroke="#d79a22" stroke-width=".6"/><circle cx="239.2" cy="88.5" r=".8" fill="#fff3c4"/><rect x="231" y="89.5" width="1.3" height="1.4" fill="#eeb52e"/><rect x="233" y="89.5" width="1.3" height="1.4" fill="#eeb52e"/></g>
<!-- trash -->
<ellipse cx="259.3" cy="92.2" rx="5.4" ry=".9" fill="#000" opacity=".12"/>
<path d="M254.5 82 H264.2 V90.6 C264.2 91.8 262 92.4 259.3 92.4 C256.6 92.4 254.5 91.8 254.5 90.6 Z" fill="url(#gTrash)" stroke="#8e8e8e" stroke-width=".7"/>
<path d="M256.4 83.6 V91.4 M258.4 83.8 V91.8 M260.4 83.8 V91.8 M262.4 83.6 V91.4" stroke="#8f908c" stroke-width=".7" opacity=".8"/>
<ellipse cx="259.3" cy="81.4" rx="5.8" ry="2.3" fill="#d9d9d9" stroke="#8f8f8f" stroke-width=".7"/>
<ellipse cx="259.3" cy="80.8" rx="4.4" ry="1.4" fill="#ececec"/>
<ellipse cx="259.3" cy="79.4" rx="1.6" ry="1" fill="#dcdcdc" stroke="#a0a0a0" stroke-width=".5"/>
<!-- org chart -->
<path d="M284.6 82.6 V84.4 M280.5 86.2 V84.4 H288.6 V86.2" fill="none" stroke="#9c9c9c" stroke-width="1"/>
<g fill="url(#gOrg)"><rect x="281.2" y="77" width="6.8" height="5.8" rx="1.2"/><rect x="277.1" y="86" width="6.8" height="6" rx="1.2"/><rect x="285.1" y="86" width="6.8" height="6" rx="1.2"/></g>
<g fill="#fdfbf4"><rect x="282.2" y="79.9" width="4.8" height="1.9"/><rect x="278.1" y="89" width="4.8" height="1.9"/><rect x="286.1" y="89" width="4.8" height="1.9"/></g>
<!-- users -->
<path d="M310.5 90.5 C310.5 86.5 312.5 85 314.5 85 C316.8 85 319 86.5 319 89.5 C319 90.4 318.4 90.6 317.6 90.6 Z" fill="#4dba88" stroke="#2c8a60" stroke-width=".5"/>
<path d="M313.6 85 L314.6 88 L315.6 85 Z" fill="#fff"/>
<path d="M311.8 80.5 C311.8 78 313 77 314.6 77 C316.2 77 317.6 78 317.6 80.8 C317.6 83 317.8 84.4 318 85 L311.2 85 C311.6 84 311.8 82.5 311.8 80.5 Z" fill="#9c5a32"/>
<ellipse cx="314.7" cy="81.2" rx="1.9" ry="2.5" fill="#f6d1a8"/>
<path d="M303.2 92 C303.2 88.4 305.4 87 308.4 87 C311.4 87 313.8 88.4 313.8 92 Z" fill="url(#gMan)" stroke="#2f6fb8" stroke-width=".5"/>
<path d="M307.2 87 L308.4 90.6 L309.6 87 Z" fill="#fff"/>
<ellipse cx="308.4" cy="83.6" rx="2.5" ry="3" fill="#f4cda2"/>
<path d="M305.6 83.4 C305.2 80.6 306.6 79.6 308.4 79.6 C310.2 79.6 311.6 80.6 311.2 83.4 C310.6 82 309.6 81.6 308.4 81.6 C307.2 81.6 306.2 82 305.6 83.4 Z" fill="#2e2a28"/>
<path d="M306.4 85.4 C307 86.8 309.8 86.8 310.4 85.4 C309.8 87.4 307 87.4 306.4 85.4 Z" fill="#6b4a32"/>
<!-- table -->
<rect x="329.6" y="77.6" width="15" height="14" rx="1" fill="#f4f8f8" stroke="url(#gTblB)" stroke-width="1.1"/>
<rect x="331.1" y="79.1" width="12" height="10.8" fill="#c6cccd"/>
<rect x="331.1" y="79.1" width="12" height="2.5" fill="#2fb0f2"/>
<rect x="331.1" y="79.1" width="2.5" height="10.8" fill="#2fb0f2"/>
<g fill="#fff"><rect x="334.1" y="82.2" width="2.1" height="1.1"/><rect x="334.1" y="84.1" width="2.1" height="1.1"/><rect x="334.1" y="86.0" width="2.1" height="1.1"/><rect x="334.1" y="87.9" width="2.1" height="1.1"/><rect x="337.1" y="82.2" width="2.1" height="1.1"/><rect x="337.1" y="84.1" width="2.1" height="1.1"/><rect x="337.1" y="86.0" width="2.1" height="1.1"/><rect x="337.1" y="87.9" width="2.1" height="1.1"/><rect x="340.1" y="82.2" width="2.1" height="1.1"/><rect x="340.1" y="84.1" width="2.1" height="1.1"/><rect x="340.1" y="86.0" width="2.1" height="1.1"/><rect x="340.1" y="87.9" width="2.1" height="1.1"/></g>
<g fill="#8fd6fa"><rect x="331.9" y="82.2" width="1" height="1"/><rect x="331.9" y="84.1" width="1" height="1"/><rect x="331.9" y="86.0" width="1" height="1"/><rect x="331.9" y="87.9" width="1" height="1"/><rect x="334.1" y="79.9" width="2.1" height="1"/><rect x="337.1" y="79.9" width="2.1" height="1"/><rect x="340.1" y="79.9" width="2.1" height="1"/><rect x="331.9" y="79.9" width="1" height="1"/></g>
<!-- doc with arrow -->
<path d="M356 92.7 H371" stroke="#777" stroke-width="1" opacity=".35"/>
<path d="M357.6 77.8 H365.2 L368.4 81 V92.2 H357.6 Z" fill="url(#gDoc)" stroke="#97a5a3" stroke-width="1"/>
<path d="M365.2 77.8 V81 H368.4" fill="#fff" stroke="#97a5a3" stroke-width=".9"/>
<path d="M363.6 88.1 H367.4 V86.3 L370.9 89.3 L367.4 92.3 V90.5 H363.6 Z" fill="#3fa4f2" stroke="#1d5fb4" stroke-width=".8" stroke-linejoin="round"/>
<path d="M364.4 89.3 H368.6" stroke="#9fdcfb" stroke-width=".7"/>
<!-- server -->
<path d="M381.5 92.8 H396.5" stroke="#666" stroke-width="1" opacity=".3"/>
<g stroke="#979797" stroke-width=".9"><rect x="383.6" y="77.6" width="10.8" height="4.4" rx=".9" fill="url(#gSrv1)"/><rect x="383.6" y="82.6" width="10.8" height="4.4" rx=".9" fill="url(#gSrv2)"/><rect x="383.6" y="87.6" width="10.8" height="4.4" rx=".9" fill="url(#gSrv3)"/></g>
<!-- key -->
<ellipse cx="414.6" cy="92.4" rx="3.4" ry=".7" fill="#000" opacity=".12"/>
<path d="M411 77.4 H418.8 C419.5 77.4 419.8 77.8 419.8 78.4 V81.6 L416.2 85.2 V86.8 L417 87.4 L416.2 88.2 L417 89 L416.2 89.8 L417 90.6 L414.6 92.6 L413 91 V85.2 L410 81.6 V78.4 C410 77.8 410.3 77.4 411 77.4 Z" fill="url(#gKey)" stroke="#c0952e" stroke-width=".8" stroke-linejoin="round"/>
<rect x="412.3" y="79.6" width="5" height="1.9" rx=".5" fill="#fff" stroke="#b5a32c" stroke-width=".8"/>
<path d="M414 85.4 V91" stroke="#f8e7ac" stroke-width=".8"/>
</svg>
<!-- messages -->
<div class="abs" style="left:966px;top:72px;width:1px;height:26px;background:#b9b9b9"></div>
<svg class="abs" style="left:981px;top:77px" width="18" height="16" viewBox="981 77 18 16">
<path d="M984 92 H997" stroke="#555" stroke-width="1" opacity=".3"/>
<path d="M990 79.4 C994 79.4 996.8 81.2 996.8 84 C996.8 85.6 995.8 87 994.2 87.8 L995.4 91 L992 88.4 C991.4 88.5 990.7 88.6 990 88.6 C986 88.6 983.2 86.6 983.2 84 C983.2 81.2 986 79.4 990 79.4 Z" fill="url(#gBub)" stroke="#c49048" stroke-width=".9" stroke-linejoin="round"/>
</svg>
<div class="abs" style="left:1007px;top:76px;font-size:11.2px;line-height:14px;color:#b4bccb;white-space:nowrap">Messages</div>
<div class="abs" style="left:1138px;top:72px;width:1px;height:26px;background:#b9b9b9"></div>
<svg class="abs" style="left:1142px;top:74px" width="74" height="22" viewBox="1142 74 74 22">
<!-- user -->
<path d="M1145 91.4 C1145 88 1147.6 86.8 1151.6 86.8 C1155.6 86.8 1158.2 88 1158.2 91.4 Z" fill="#161616"/>
<ellipse cx="1151.6" cy="83.2" rx="2.9" ry="3.6" fill="#f6cfa0"/>
<path d="M1148.2 84 C1147.6 79.6 1149.4 77.8 1151.8 77.8 C1154.2 77.8 1155.8 79.6 1155 84 C1154.6 82 1153.8 81 1151.6 81.2 C1149.6 81 1148.6 82 1148.2 84 Z" fill="#111"/>
<path d="M1150.4 86.4 H1152.8 V88 H1150.4 Z" fill="#f0c090"/>
<!-- book -->
<path d="M1171 92.8 H1186" stroke="#555" stroke-width="1" opacity=".3"/>
<rect x="1172" y="77.4" width="12" height="15" fill="#4d8fd2" stroke="#3a78ba" stroke-width=".6"/>
<rect x="1172" y="77.4" width="1.6" height="15" fill="#1e2226"/>
<path d="M1173.6 78.2 H1184" stroke="#dfe9d8" stroke-width="1"/>
<text x="1178.9" y="89.6" font-family="Liberation Sans, sans-serif" font-size="10" font-weight="bold" fill="#f2f6fb" stroke="#f2f6fb" stroke-width=".3" text-anchor="middle">?</text>
<!-- info -->
<ellipse cx="1204" cy="92.4" rx="5.5" ry=".9" fill="#000" opacity=".18"/>
<circle cx="1203.9" cy="84.8" r="7" fill="url(#gInfo)"/>
<text x="1203.9" y="89.2" font-family="Liberation Sans, sans-serif" font-size="11.5" font-weight="bold" fill="#fff" stroke="#fff" stroke-width=".7" text-anchor="middle">i</text>
</svg>

<!-- tab strip -->
<div class="abs" style="left:220px;top:99px;width:1002px;height:26px;box-sizing:border-box;border:1px solid #99bbe8;background:linear-gradient(#dee8f6,#d3e0f1);"></div>
<div class="abs" style="left:221px;top:121px;width:1000px;height:1px;background:#8db2e3"></div>
<div class="abs" style="left:221px;top:122px;width:1000px;height:2px;background:#deecfd"></div>
<div class="tab" style="left:223px;top:101px;width:160px;"><div class="ti"><span style="position:relative;left:17px">Portal Main</span></div></div>
<div class="tab" style="left:385px;top:101px;width:135px;"><div class="ti"><span style="position:relative;left:3px;letter-spacing:0">2.SalesCube</span></div></div>
<div class="tab act" style="left:522px;top:101px;width:135px;"><div class="ti"><span style="position:relative;left:3px">Arc Chart</span></div></div>
<div class="abs" style="left:523px;top:121px;width:133px;height:1px;background:#deecfd"></div>
<svg class="abs" style="left:505px;top:105px" width="12" height="12" viewBox="0 0 12 12"><rect x=".5" y=".5" width="10.6" height="10.6" rx="3" fill="#e6eefa" stroke="#adc8ec" stroke-width="1"/><path d="M3.5 3.5 L8.1 8.1 M8.1 3.5 L3.5 8.1" stroke="#7598cc" stroke-width="1.9"/></svg>
<svg class="abs" style="left:642px;top:105px" width="12" height="12" viewBox="0 0 12 12"><rect x=".5" y=".5" width="10.6" height="10.6" rx="3" fill="#eef4fc" stroke="#adc8ec" stroke-width="1"/><path d="M3.5 3.5 L8.1 8.1 M8.1 3.5 L3.5 8.1" stroke="#7598cc" stroke-width="1.9"/></svg>

<!-- toolbar -->
<div class="abs" style="left:220px;top:124px;width:1002px;height:27px;box-sizing:border-box;border:1px solid #99bbe8;border-bottom:none;background:linear-gradient(#e0e9f6,#dae5f3 50%,#d3dfef);"></div>
<svg class="abs" style="left:222px;top:126px" width="400" height="24" viewBox="222 126 400 24">
<!-- separators -->
<g stroke="#a6c6f2" stroke-width="1"><path d="M297.5 131 V145 M328.5 131 V145 M359.5 131 V145 M390.5 131 V145 M421.5 131 V145 M464.5 131 V145"/></g>
<g stroke="#f6f9fe" stroke-width="1"><path d="M298.5 131 V145 M329.5 131 V145 M360.5 131 V145 M391.5 131 V145 M422.5 131 V145 M465.5 131 V145"/></g>
<!-- save -->
<path d="M226 145.6 H242" stroke="#444" stroke-width="1" opacity=".3"/>
<path d="M227.4 131.2 H240 C240.6 131.2 241 131.6 241 132.2 V144.8 H228.6 L227 143.2 V131.6 Z" fill="#3a3c3e" stroke="#222" stroke-width=".5"/>
<rect x="229.2" y="131.8" width="9.6" height="6.4" fill="url(#gLabel)"/>
<rect x="230.4" y="140" width="7" height="4.8" fill="#c9c9c9"/>
<rect x="231.4" y="141" width="2" height="3.2" fill="#2a2a2a"/>
<!-- save as -->
<path d="M250.4 130.2 H260.6 V140.6 H251.4 L250.4 139.6 Z" fill="#c4c4c4" stroke="#9a9a9a" stroke-width=".6"/>
<rect x="252" y="130.6" width="7" height="4.6" fill="#f6f6f6"/>
<rect x="253" y="137.4" width="4.6" height="3" fill="#e4e4e4"/><rect x="253.6" y="138" width="1.4" height="2" fill="#777"/>
<path d="M255.6 135.2 H266 V145.6 H256.8 L255.6 144.4 Z" fill="#6585c8" stroke="#38508c" stroke-width=".7"/>
<rect x="257.4" y="135.8" width="7" height="4.8" fill="url(#gLabel2)"/>
<rect x="258.4" y="142" width="5.2" height="3.4" fill="#2f3f6e"/><rect x="260.8" y="142.6" width="2" height="2.2" fill="#e8ecf6"/>
<!-- alert -->
<ellipse cx="282" cy="145.2" rx="5.5" ry=".9" fill="#000" opacity=".2"/>
<circle cx="282" cy="137.7" r="7" fill="url(#gRed)"/>
<rect x="281" y="133.4" width="2.1" height="5.4" rx=".5" fill="#fff"/><rect x="281" y="140" width="2.1" height="2" rx=".4" fill="#fff"/>
<!-- grid -->
<g fill="#2b3440"><rect x="305" y="130" width="4" height="2"/><rect x="311" y="130" width="4" height="2"/><rect x="317" y="130" width="4" height="2"/></g>
<g stroke="#6c7077" stroke-width="1"><path d="M305 133.5 H309 M305 135.5 H309 M305 137.5 H309 M305 139.5 H309 M305 141.5 H309 M305 143.5 H309 M305 145.5 H309"/><path d="M311 133.5 H315 M311 135.5 H315 M311 137.5 H315 M311 139.5 H315 M311 141.5 H315 M311 143.5 H315 M311 145.5 H315"/><path d="M317 133.5 H321 M317 135.5 H321 M317 137.5 H321 M317 139.5 H321 M317 141.5 H321 M317 143.5 H321 M317 145.5 H321"/></g>
<!-- chart -->
<rect x="336.5" y="130.5" width="15" height="14" fill="#f6eedc" stroke="#b0a190" stroke-width="1"/>
<path d="M337.5 133.5 H350.5 M337.5 135.5 H350.5 M337.5 137.5 H350.5 M337.5 139.5 H350.5 M337.5 141.5 H350.5" stroke="#e6dcc6" stroke-width="1"/>
<rect x="339" y="136" width="3.2" height="8" rx=".8" fill="#e0202a" stroke="#b4121c" stroke-width=".5"/>
<rect x="342.4" y="132" width="3.4" height="12" rx=".8" fill="#2ba6e6" stroke="#1680c0" stroke-width=".5"/>
<rect x="346" y="134" width="3.2" height="10" rx=".8" fill="#6cc63a" stroke="#4a9c22" stroke-width=".5"/>
<!-- gamepad -->
<rect x="367.6" y="131.6" width="15" height="12" rx="1.6" fill="#f3e6c8" stroke="#a81e1c" stroke-width="1.1"/>
<path d="M376.5 132 H382 V138 H378.5 Z" fill="#c6302c"/>
<path d="M377.6 139.2 H382 V143 H377.6 Z" fill="#c6302c"/>
<path d="M373 134.4 H375 V136.6 H377.2 V138.6 H375 V140.8 H373 V138.6 H370.8 V136.6 H373 Z" fill="#1c1c1c"/>
<path d="M378.6 140.6 H379.8 M380.6 140.6 H381.8" stroke="#222" stroke-width="1.1"/>
<rect x="369.6" y="133" width="1" height="1" fill="#333"/>
<!-- funnel -->
<ellipse cx="405.5" cy="145.6" rx="4" ry=".8" fill="#000" opacity=".2"/>
<path d="M399 131.2 H412.2 V132.4 L406.8 138.4 V145 H404.4 V138.4 L399 132.4 Z" fill="url(#gFun)" stroke="#8a8a8a" stroke-width=".7" stroke-linejoin="round"/>
<!-- printer -->
<path d="M433.2 136.4 V130.4 H439.6 L442 132.8 V136.4" fill="#e8f0fb" stroke="#4a8ae0" stroke-width="1"/>
<path d="M439.6 130.4 V132.8 H442" fill="#fff" stroke="#4a8ae0" stroke-width=".8"/>
<path d="M430.4 136.2 H444.4 C445.2 136.2 445.6 136.8 445.6 137.6 V143 C445.6 143.8 445.2 144.2 444.4 144.2 H430.4 C429.6 144.2 429.2 143.8 429.2 143 V137.6 C429.2 136.8 429.6 136.2 430.4 136.2 Z" fill="url(#gPrn)" stroke="#7d7d7d" stroke-width=".8"/>
<rect x="431.6" y="139.4" width="11.6" height="1.4" fill="#8c8c8c"/>
<path d="M432.6 141.6 H442.4 V145.6 H432.6 Z" fill="#f4f8fd" stroke="#4a8ae0" stroke-width="1"/>
<path d="M449 137.4 H454.4 L451.7 140.4 Z" fill="#111"/>
<!-- toolbox -->
<path d="M476.6 134.4 V132.6 C476.6 131.6 477.2 131.2 478 131.2 H482 C482.8 131.2 483.4 131.6 483.4 132.6 V134.4" fill="none" stroke="#707070" stroke-width="1.3"/>
<rect x="472.2" y="134.2" width="15.6" height="9.4" rx="1" fill="url(#gRedBox)" stroke="#a8141a" stroke-width=".7"/>
<path d="M472.6 138.6 H487.4" stroke="#a8141a" stroke-width=".8"/>
<rect x="479" y="137.2" width="2.2" height="3.2" fill="#f4f4f4" stroke="#999" stroke-width=".4"/>
<path d="M492 137.4 H497.4 L494.7 140.4 Z" fill="#111"/>
</svg>
<div class="abs lbl" style="left:512px;top:131px;line-height:14px;white-space:nowrap">Wizard</div>
<div class="abs lbl" style="left:562px;top:131px;line-height:14px;white-space:nowrap">Chart type</div>
<svg class="abs" style="left:620px;top:136px" width="7" height="5" viewBox="0 0 7 5"><path d="M0.8 0.8 H6.2 L3.5 3.9 Z" fill="#111"/></svg>
<!-- help icon right -->
<svg class="abs" style="left:1197px;top:128px" width="22" height="20" viewBox="1197 128 22 20">
<path d="M1200.2 138.2 L1207.6 130.2 L1215.8 134.2 L1207.2 142.6 Z" fill="url(#gBook)" stroke="#6c5cc0" stroke-width=".7" stroke-linejoin="round"/>
<path d="M1200.2 138.2 L1207.2 142.6 L1207.2 144.8 L1200.2 140.2 Z" fill="#f0eefa" stroke="#6c5cc0" stroke-width=".6" stroke-linejoin="round"/>
<path d="M1207.2 142.6 L1215.8 134.2 V136.4 L1207.2 144.8 Z" fill="#7464c4" stroke="#6c5cc0" stroke-width=".5"/>
<circle cx="1210.5" cy="140.7" r="3.9" fill="#f4f6fc" stroke="#3f74e0" stroke-width="1.1"/>
<text x="1210.5" y="143.5" font-family="Liberation Sans, sans-serif" font-size="7" font-weight="bold" fill="#2c3c9c" text-anchor="middle">?</text>
</svg>

<!-- chart frame -->
<div class="abs" style="left:220px;top:151px;width:1002px;height:503px;box-sizing:border-box;border:3px solid #99bbe8;background:#fff"></div>
<div class="abs" style="left:225px;top:156px;width:992px;height:493px;box-sizing:border-box;border:1px solid #99bbe8;background:#fff"></div>
<svg class="abs" style="left:226px;top:157px" width="990" height="491" viewBox="226 157 990 491">
<g fill="none" stroke="#000" stroke-opacity="0.2">
<path d="M325 557.7 A99.0 99.0 0 0 1 523 557.7" stroke-width="3.4"/>
<path d="M325 557.7 A198.0 198.0 0 0 1 721 557.7" stroke-width="11"/>
<path d="M325 557.7 A297.0 297.0 0 0 1 919 557.7" stroke-width="1.0"/>
<path d="M523 557.7 A99.0 99.0 0 0 1 721 557.7" stroke-width="0.35"/>
<path d="M523 557.7 A198.0 198.0 0 0 1 919 557.7" stroke-width="0.9"/>
<path d="M523 557.7 A297.0 297.0 0 0 1 1117 557.7" stroke-width="0.3"/>
<path d="M721 557.7 A99.0 99.0 0 0 1 919 557.7" stroke-width="0.9"/>
<path d="M721 557.7 A198.0 198.0 0 0 1 1117 557.7" stroke-width="0.8"/>
</g>
<circle cx="325" cy="557.7" r="4.1" fill="#b3cf6c" stroke="#84a046" stroke-width="1.2"/>
<circle cx="523" cy="557.7" r="3.0" fill="#c5d39b" stroke="#93a36e" stroke-width="1.1"/>
<circle cx="721" cy="557.7" r="4.0" fill="#4b5b8d" stroke="#36457a" stroke-width="1"/>
<circle cx="919" cy="557.7" r="2.8" fill="#6b71ab" stroke="#565c97" stroke-width="1"/>
<circle cx="1117" cy="557.7" r="2.6" fill="#9c9cd2" stroke="#8585bd" stroke-width="1"/>
<text transform="translate(328.6 564.6) rotate(-90)" text-anchor="end" font-family="Liberation Sans, sans-serif" font-size="10" fill="#000">Life</text>
<text transform="translate(526.6 564.6) rotate(-90)" text-anchor="end" font-family="Liberation Sans, sans-serif" font-size="10" fill="#000">Fruit D</text>
<text transform="translate(724.6 564.6) rotate(-90)" text-anchor="end" font-family="Liberation Sans, sans-serif" font-size="10" fill="#000">Fruit C</text>
<text transform="translate(922.6 564.6) rotate(-90)" text-anchor="end" font-family="Liberation Sans, sans-serif" font-size="10" fill="#000">Fruit B</text>
<text transform="translate(1120.6 564.6) rotate(-90)" text-anchor="end" font-family="Liberation Sans, sans-serif" font-size="10" fill="#000">Fruit A</text>
</svg>

<!-- status bar -->
<div class="abs" style="left:220px;top:654px;width:1002px;height:28px;box-sizing:border-box;border:1px solid #99bbe8;border-top:none;background:linear-gradient(#dfe8f5,#d9e4f2 50%,#d4e0f0);"></div>
<svg class="abs" style="left:230px;top:662px" width="16" height="16" viewBox="0 0 16 16">
<circle cx="8" cy="7.6" r="6.9" fill="#3fa43a"/>
<circle cx="8" cy="7.6" r="5.2" fill="#5cbb50" stroke="#d9f0d4" stroke-width="1"/>
<path d="M5 7.8 L7.2 9.8 L11 5.6" fill="none" stroke="#fff" stroke-width="1.8" stroke-linecap="round" stroke-linejoin="round"/>
</svg>
<div class="abs lbl" style="left:252px;top:661px;line-height:14px;color:#333;white-space:nowrap">Ready</div>
<!-- window corners -->
<svg class="abs" style="left:0;top:677px" width="10" height="10" viewBox="0 0 10 10"><path d="M0 6 C0.3 8.3 1.7 9.7 4 10 H0 Z" fill="#111"/></svg>
<svg class="abs" style="left:1217px;top:677px" width="10" height="10" viewBox="0 0 10 10"><path d="M10 6 C9.7 8.3 8.3 9.7 6 10 H10 Z" fill="#111"/></svg>

</body>
</html>
